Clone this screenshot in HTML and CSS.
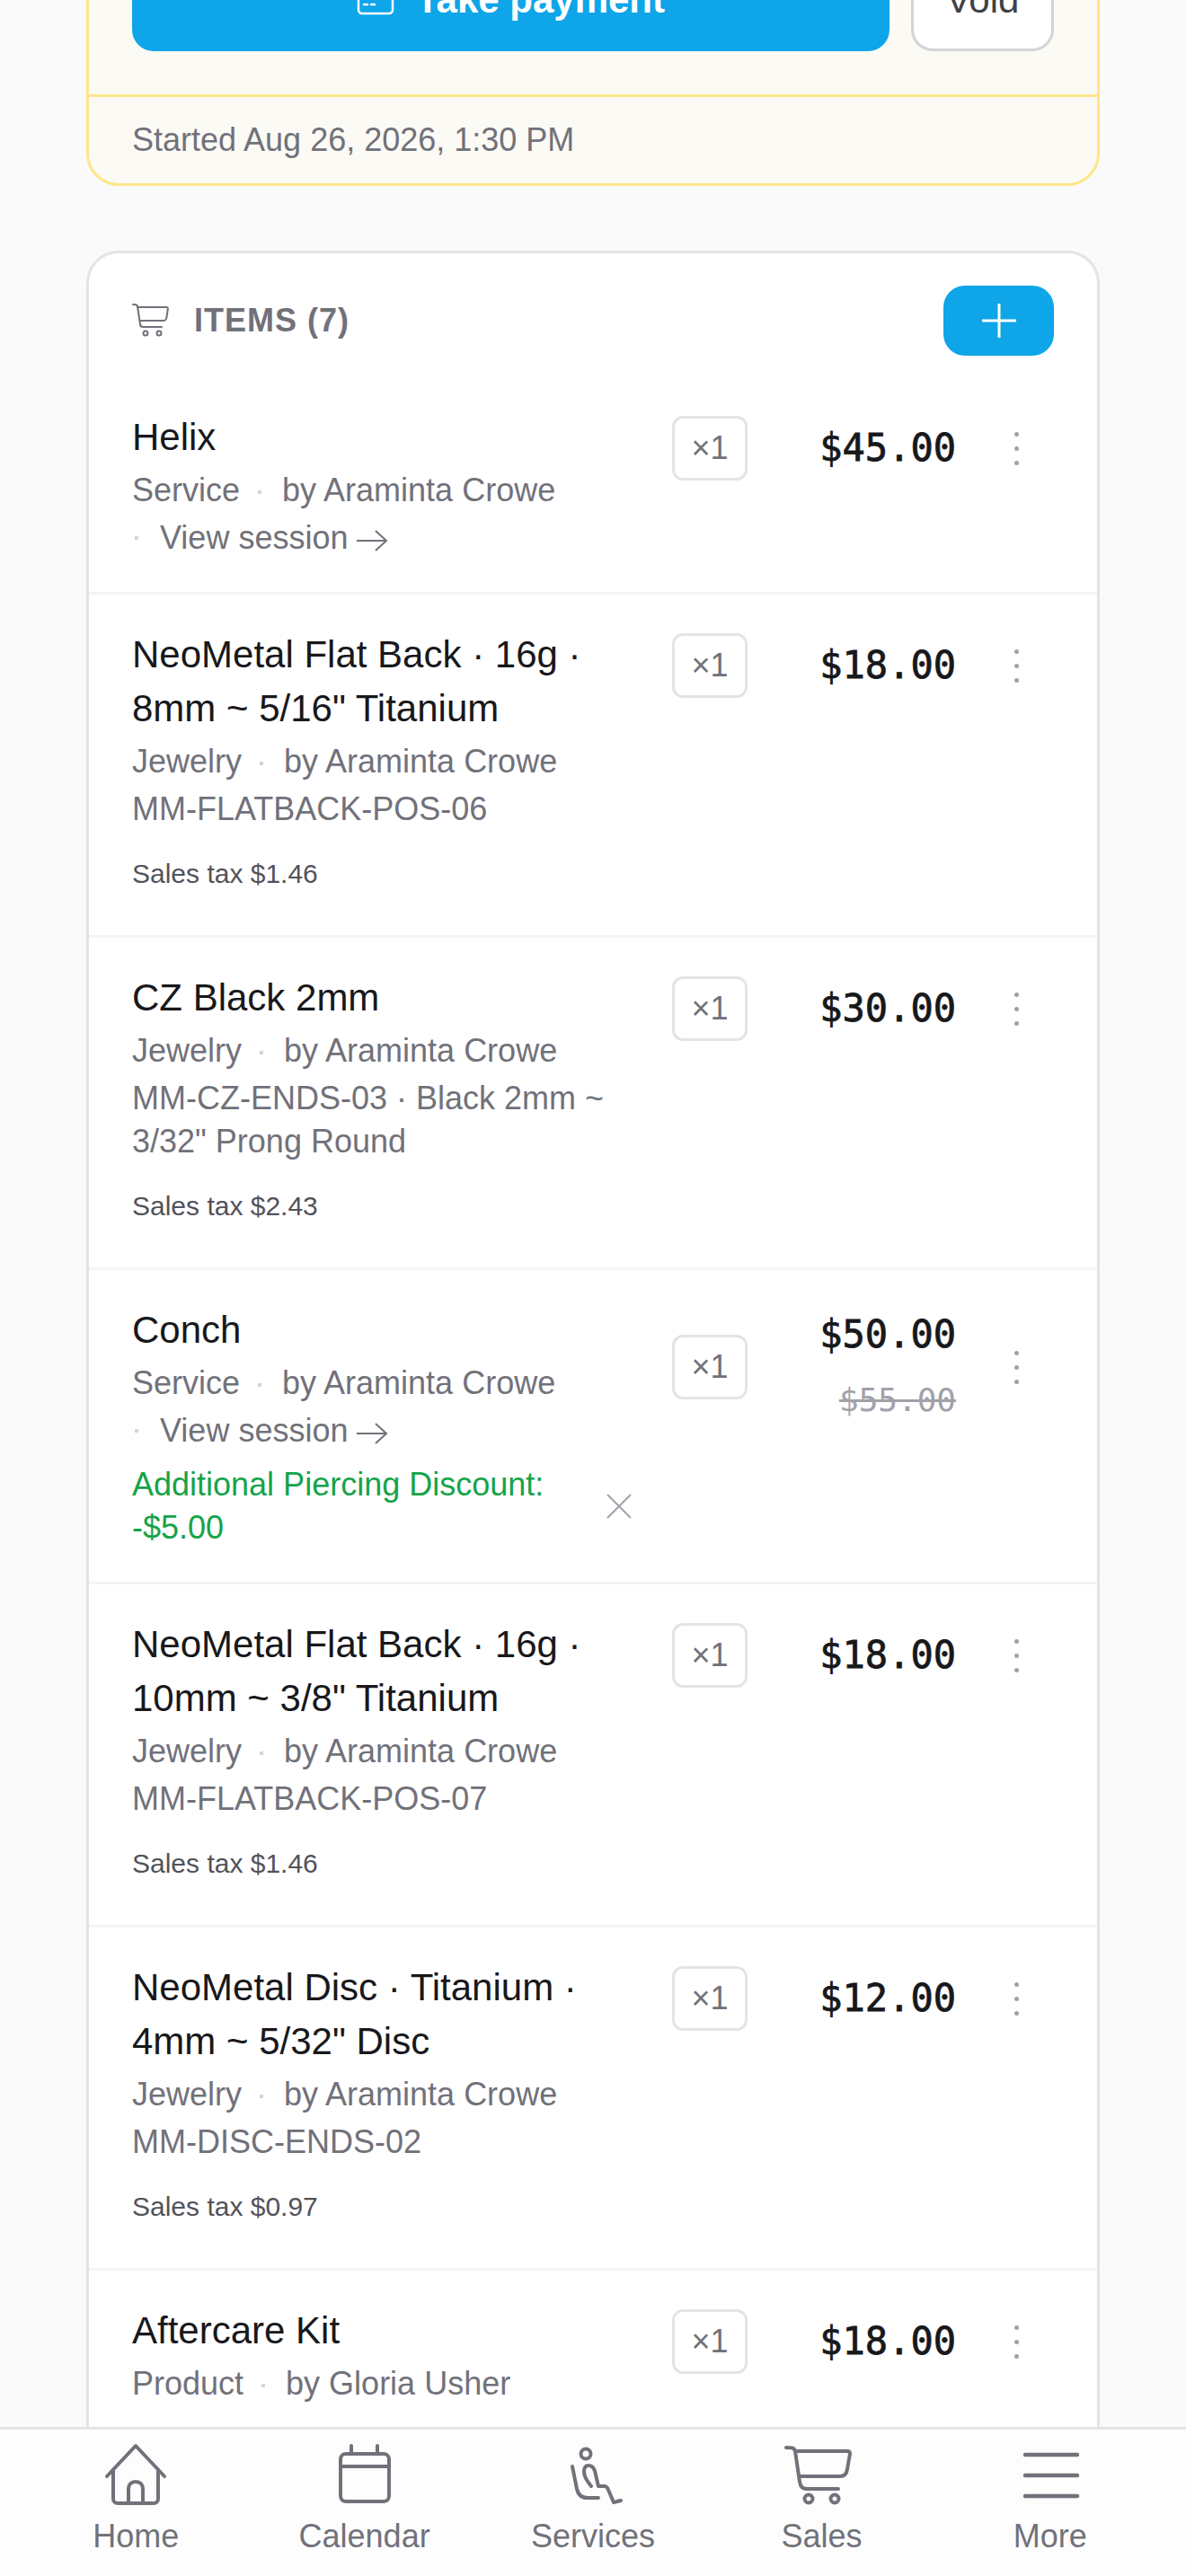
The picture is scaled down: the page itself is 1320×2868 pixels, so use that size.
FILE: index.html
```html
<!DOCTYPE html>
<html lang="en">
<head>
<meta charset="UTF-8" />
<meta name="viewport" content="width=device-width, initial-scale=1" />
<title>Sale</title>
<link rel="stylesheet" href="styles.css">
</head>
<body>

<main class="scroll">
  <section class="checkout">
    <div class="checkout-actions">
      <button class="btn-pay">
        <svg class="pay-icon" viewBox="0 0 42 42" fill="none" stroke="currentColor" stroke-width="2.5" stroke-linecap="round" stroke-linejoin="round"><rect x="2" y="6" width="38" height="30" rx="4"/><path d="M2 15h38M8 26h4M16 26h4"/></svg>
        Take payment
      </button>
      <button class="btn-void">Void</button>
    </div>
    <div class="checkout-foot">Started Aug 26, 2026, 1:30 PM</div>
  </section>

  <section class="items">
    <header class="items-head">
      <svg class="items-cart" viewBox="0 0 42 42" fill="none" stroke="currentColor" stroke-width="2" stroke-linecap="round" stroke-linejoin="round"><path d="M1 3c3 0 4.500 0 5 2l3 20c.3 2 1 3 3 3h21"/><path d="M6 6h32c1.400 0 2 .7 1.800 2l-1.300 9c-.3 2.500-1.500 4-3.500 4H9"/><circle cx="15" cy="35" r="2.500"/><circle cx="30" cy="35" r="2.500"/></svg>
      <h2 class="items-title">ITEMS (7)</h2>
      <button class="btn-add"><svg viewBox="0 0 38 38" fill="none" stroke="#fff" stroke-width="3"><path d="M19 0v38M0 19h38"/></svg></button>
    </header>

    <article class="item">
      <div class="item-info">
        <div class="item-name">Helix</div>
        <div class="item-meta">Service <span class="dot"></span> by Araminta Crowe</div>
        <div class="item-link"><span class="dot dot-lead"></span>View session <svg class="arrow" viewBox="0 0 36 26" fill="none" stroke="currentColor" stroke-width="2"><path d="M1 13h33M22 2l12 11-12 11"/></svg></div>
      </div>
      <div class="qty">×1</div>
      <div class="price-col"><div class="price">$45.00</div></div>
      <div class="kebab"><i></i><i></i><i></i></div>
    </article>

    <article class="item">
      <div class="item-info">
        <div class="item-name">NeoMetal Flat Back · 16g · 8mm ~ 5/16" Titanium</div>
        <div class="item-meta">Jewelry <span class="dot"></span> by Araminta Crowe</div>
        <div class="item-sku">MM-FLATBACK-POS-06</div>
        <div class="item-tax">Sales tax $1.46</div>
      </div>
      <div class="qty">×1</div>
      <div class="price-col"><div class="price">$18.00</div></div>
      <div class="kebab"><i></i><i></i><i></i></div>
    </article>

    <article class="item">
      <div class="item-info">
        <div class="item-name">CZ Black 2mm</div>
        <div class="item-meta">Jewelry <span class="dot"></span> by Araminta Crowe</div>
        <div class="item-sku">MM-CZ-ENDS-03 · Black 2mm ~ 3/32" Prong Round</div>
        <div class="item-tax">Sales tax $2.43</div>
      </div>
      <div class="qty">×1</div>
      <div class="price-col"><div class="price">$30.00</div></div>
      <div class="kebab"><i></i><i></i><i></i></div>
    </article>

    <article class="item item-discounted">
      <div class="item-info">
        <div class="item-name">Conch</div>
        <div class="item-meta">Service <span class="dot"></span> by Araminta Crowe</div>
        <div class="item-link"><span class="dot dot-lead"></span>View session <svg class="arrow" viewBox="0 0 36 26" fill="none" stroke="currentColor" stroke-width="2"><path d="M1 13h33M22 2l12 11-12 11"/></svg></div>
        <div class="item-discount">
          <span>Additional Piercing Discount: -$5.00</span>
          <svg class="discount-x" viewBox="0 0 30 30" fill="none" stroke="currentColor" stroke-width="2"><path d="M2 2l26 26M28 2L2 28"/></svg>
        </div>
      </div>
      <div class="qty">×1</div>
      <div class="price-col"><div class="price">$50.00</div><div class="price-old">$55.00</div></div>
      <div class="kebab"><i></i><i></i><i></i></div>
    </article>

    <article class="item">
      <div class="item-info">
        <div class="item-name">NeoMetal Flat Back · 16g · 10mm ~ 3/8" Titanium</div>
        <div class="item-meta">Jewelry <span class="dot"></span> by Araminta Crowe</div>
        <div class="item-sku">MM-FLATBACK-POS-07</div>
        <div class="item-tax">Sales tax $1.46</div>
      </div>
      <div class="qty">×1</div>
      <div class="price-col"><div class="price">$18.00</div></div>
      <div class="kebab"><i></i><i></i><i></i></div>
    </article>

    <article class="item">
      <div class="item-info">
        <div class="item-name">NeoMetal Disc · Titanium · 4mm ~ 5/32" Disc</div>
        <div class="item-meta">Jewelry <span class="dot"></span> by Araminta Crowe</div>
        <div class="item-sku">MM-DISC-ENDS-02</div>
        <div class="item-tax">Sales tax $0.97</div>
      </div>
      <div class="qty">×1</div>
      <div class="price-col"><div class="price">$12.00</div></div>
      <div class="kebab"><i></i><i></i><i></i></div>
    </article>

    <article class="item item-last">
      <div class="item-info">
        <div class="item-name">Aftercare Kit</div>
        <div class="item-meta">Product <span class="dot"></span> by Gloria Usher</div>
      </div>
      <div class="qty">×1</div>
      <div class="price-col"><div class="price">$18.00</div></div>
      <div class="kebab"><i></i><i></i><i></i></div>
    </article>
  </section>
</main>

<nav class="tabbar">
  <a class="tab">
    <svg viewBox="0 0 72 72" fill="none" stroke="currentColor" stroke-width="4" stroke-linecap="round" stroke-linejoin="round"><path d="M4 37L36 3l32 34"/><path d="M11 30v32c0 3 2 5 5 5h40c3 0 5-2 5-5V30"/><path d="M28 67V51c0-5 3-8 8-8s8 3 8 8v16"/></svg>
    <span>Home</span>
  </a>
  <a class="tab">
    <svg viewBox="0 0 72 72" fill="none" stroke="currentColor" stroke-width="4" stroke-linecap="round" stroke-linejoin="round"><rect x="9" y="12" width="54" height="53" rx="6"/><path d="M9 26h54M21 3v9M50 3v9"/></svg>
    <span>Calendar</span>
  </a>
  <a class="tab">
    <svg viewBox="0 0 72 72" fill="none" stroke="currentColor" stroke-width="4" stroke-linecap="round" stroke-linejoin="round"><circle cx="28" cy="12" r="5.500"/><path d="M13 26l5 25c1.500 7 5 10 12 10h12"/><path d="M34 48c-5-6-8-12-8-16 0-5 2-7 5-7 4 0 6 3 7 6l4 17h6c3 0 4 1 5 4l6 14 8-2"/></svg>
    <span>Services</span>
  </a>
  <a class="tab">
    <svg viewBox="0 0 72 72" fill="none" stroke="currentColor" stroke-width="4" stroke-linecap="round" stroke-linejoin="round"><path d="M-3 5c6 0 9 0 10 4l5 34c.6 5 3 8 8 8h35"/><path d="M8 9h57c2 0 3 1 3 3l-3 17c-.6 5-3 8-8 8H12"/><circle cx="22" cy="62" r="4.500"/><circle cx="51" cy="62" r="4.500"/></svg>
    <span>Sales</span>
  </a>
  <a class="tab">
    <svg viewBox="0 0 72 72" fill="none" stroke="currentColor" stroke-width="4.500" stroke-linecap="round"><path d="M8 13h58M8 36h58M8 59h58"/></svg>
    <span>More</span>
  </a>
</nav>

</body>
</html>
```

FILE: styles.css
```css
* {
  box-sizing: border-box;
}
html, body {
  margin: 0;
  height: 100%;
}
body {
  display: flex;
  flex-direction: column;
  height: 2868px;
  overflow: hidden;
  font-family: "Liberation Sans", Arial, sans-serif;
  background: #fafafa;
  color: #18181b;
}
button {
  font-family: inherit;
  cursor: pointer;
}

.scroll {
  flex: 1;
  min-height: 0;
  overflow: hidden;
  padding: 0 96px;
}

/* checkout card, scrolled partly off the top */
.checkout {
  margin-top: -60px;
  background: #fbfaf4;
  border: 3px solid #fde68a;
  border-radius: 36px;
}
.checkout-actions {
  display: flex;
  gap: 24px;
  padding: 0 48px 48px;
}
.btn-pay {
  flex: 1;
  height: 114px;
  display: flex;
  align-items: center;
  justify-content: center;
  gap: 24px;
  border: none;
  border-radius: 24px;
  background: #0ea5e9;
  color: #fff;
  font-size: 42px;
  font-weight: bold;
}
.pay-icon {
  width: 42px;
  height: 42px;
}
.btn-void {
  width: 159px;
  height: 114px;
  background: #fff;
  border: 3px solid #d4d4d8;
  border-radius: 24px;
  color: #3f3f46;
  font-size: 42px;
}
.checkout-foot {
  border-top: 3px solid #fde68a;
  padding: 27px 48px;
  font-size: 36px;
  line-height: 42px;
  color: #71717a;
}

/* items */
.items {
  margin-top: 72px;
  background: #fff;
  border: 3px solid #e4e4e7;
  border-radius: 36px;
}
.items-head {
  display: flex;
  align-items: center;
  padding: 36px 48px 24px;
}
.items-cart {
  width: 42px;
  height: 42px;
  color: #71717a;
}
.items-title {
  flex: 1;
  margin: 0 0 0 27px;
  font-size: 36px;
  font-weight: bold;
  letter-spacing: 1px;
  color: #71717a;
}
.btn-add {
  width: 123px;
  height: 78px;
  padding: 0;
  display: flex;
  align-items: center;
  justify-content: center;
  background: #0ea5e9;
  border: none;
  border-radius: 24px;
}
.btn-add svg {
  width: 38px;
  height: 38px;
}

.item {
  display: flex;
  align-items: flex-start;
  padding: 37px 48px 36px;
  border-bottom: 3px solid #f4f4f5;
}
/* the card runs on below the tab bar */
.item-last {
  padding-bottom: 96px;
}
.item-info {
  width: 601px;
  flex: none;
}
.item-name {
  width: 560px;
  font-size: 42px;
  line-height: 60px;
  color: #18181b;
}
.item-meta, .item-link, .item-sku {
  margin-top: 5px;
  font-size: 36px;
  line-height: 48px;
  color: #71717a;
}
.item-sku {
  width: 570px;
}
.item-link {
  display: flex;
  align-items: center;
}
.dot {
  display: inline-block;
  width: 4px;
  height: 4px;
  margin: 0 13px 0 10px;
  vertical-align: middle;
  background: #d4d4d8;
}
.dot-lead {
  margin: 0 24px 0 3px;
}
.arrow {
  width: 36px;
  height: 26px;
  margin-left: 9px;
  margin-top: 6px;
}
.item-tax {
  margin: 30px 0 14px;
  font-size: 30px;
  line-height: 36px;
  color: #52525b;
}
.item-discount {
  display: flex;
  align-items: center;
  margin-top: 12px;
  font-size: 36px;
  line-height: 48px;
  color: #16a34a;
}
.item-discount span {
  width: 500px;
}
.discount-x {
  width: 30px;
  height: 30px;
  margin-left: 27px;
  color: #a1a1aa;
}

.qty {
  flex: none;
  width: 84px;
  height: 72px;
  margin-top: 6px;
  display: flex;
  align-items: center;
  justify-content: center;
  border: 3px solid #e4e4e7;
  border-radius: 12px;
  font-size: 36px;
  color: #71717a;
}
.item-discounted .qty {
  margin-top: 35px;
}
.price-col {
  flex: none;
  width: 232px;
  text-align: right;
}
.price {
  font-family: "DejaVu Sans Mono", monospace;
  font-size: 42px;
  line-height: 60px;
  font-weight: 500;
  -webkit-text-stroke: 0.8px #18181b;
  margin-top: 12px;
}
.item-discounted .price {
  margin-top: 5px;
}
.price-old {
  margin-top: 19px;
  font-family: "DejaVu Sans Mono", monospace;
  font-size: 36px;
  line-height: 48px;
  color: #a1a1aa;
  text-decoration: line-through;
}
.kebab {
  flex: none;
  width: 72px;
  height: 72px;
  margin: 6px 0 0 31px;
  display: flex;
  flex-direction: column;
  align-items: center;
  justify-content: center;
  gap: 11px;
}
.item-discounted .kebab {
  margin-top: 35px;
}
.kebab i {
  width: 5px;
  height: 5px;
  border-radius: 50%;
  background: #a1a1aa;
}

/* bottom nav */
.tabbar {
  flex: none;
  height: 166px;
  display: flex;
  padding: 0 24px;
  background: #fdfdfd;
  border-top: 3px solid #e4e4e7;
}
.tab {
  flex: 1;
  display: flex;
  flex-direction: column;
  align-items: center;
  padding-top: 15px;
  color: #71717a;
  font-size: 36px;
}
.tab svg {
  width: 72px;
  height: 72px;
  overflow: visible;
}
.tab span {
  margin-top: 11px;
}
```
